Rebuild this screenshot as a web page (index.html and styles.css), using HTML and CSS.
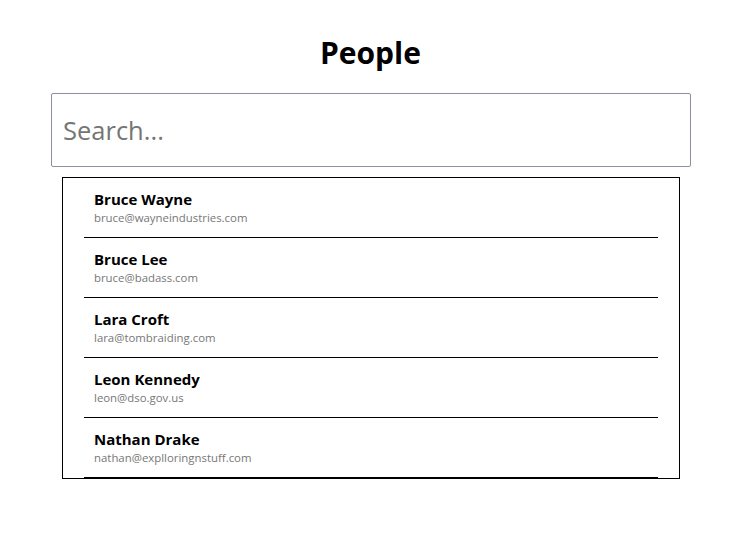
FILE: index.html
```html
<!DOCTYPE html>
<html>
<head>
<meta charset="utf-8">
<link rel="stylesheet" href="styles.css">
</head>
<body>
<div class="app">
  <h1 class="title">People</h1>
  <input class="search" type="text" placeholder="Search...">
  <ul class="people">
    <li class="person"><div class="name">Bruce Wayne</div><div class="email">bruce@wayneindustries.com</div></li>
    <li class="person"><div class="name">Bruce Lee</div><div class="email">bruce@badass.com</div></li>
    <li class="person"><div class="name">Lara Croft</div><div class="email">lara@tombraiding.com</div></li>
    <li class="person"><div class="name">Leon Kennedy</div><div class="email">leon@dso.gov.us</div></li>
    <li class="person"><div class="name">Nathan Drake</div><div class="email">nathan@explloringnstuff.com</div></li>
  </ul>
</div>
</body>
</html>
```
FILE: styles.css
```css
html, body { margin: 0; padding: 0; background: #fff; }
body { font-family: "Open Sans", "Noto Sans", sans-serif; }
.app { width: 741px; display: flex; flex-direction: column; }
.title {
  margin: 33px 0 0;
  height: 40px;
  line-height: 40px;
  font-size: 30px;
  font-weight: 700;
  text-align: center;
  color: #000;
}
.search {
  box-sizing: border-box;
  margin: 20px 0 0 51px;
  width: 640px;
  height: 74px;
  border: 1px solid #8f8f9d;
  border-radius: 2px;
  padding: 0 11px;
  font-family: inherit;
  font-size: 25.5px;
  color: #000;
  outline: none;
}
.search::placeholder { color: #757575; }
.people {
  list-style: none;
  box-sizing: border-box;
  margin: 10px 0 0 62px;
  width: 618px;
  padding: 0 21px;
  border: 1px solid #000;
}
.person {
  height: 47px;
  border-bottom: 1px solid #000;
  padding: 12px 0 0 10px;
}
.name { font-size: 15px; font-weight: 700; line-height: 19px; color: #000; }
.email { font-size: 11.4px; line-height: 17px; color: #777; }
```
